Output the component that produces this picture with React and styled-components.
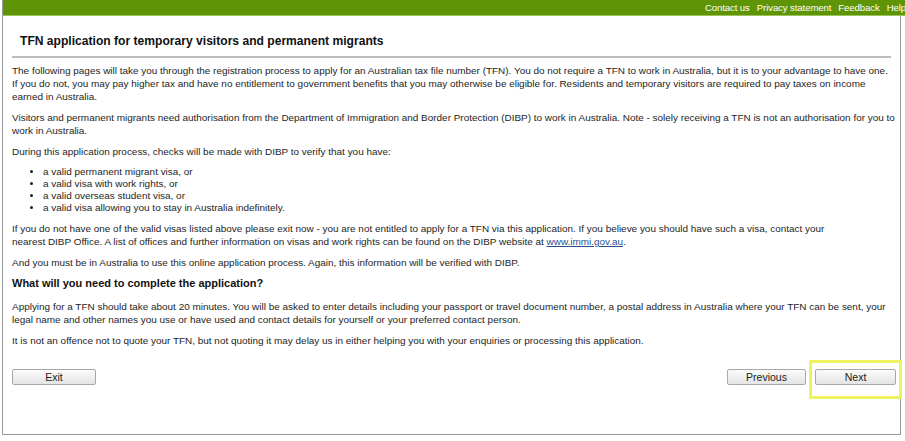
import React from 'react'
import styled, { createGlobalStyle } from 'styled-components'

const GlobalStyle = createGlobalStyle`
  html, body {
    margin: 0;
    padding: 0;
    background: #fff;
    overflow: hidden;
  }
  body {
    font-family: "Liberation Sans", Arial, sans-serif;
    color: #1e1e1e;
  }
`

const Page = styled.div`
  width: 905px;
  height: 441px;
  padding-left: 2px;
  box-sizing: border-box;
  overflow: hidden;
`

const Frame = styled.div`
  border-left: 1px solid #9a9a9a;
`

// the bar runs past the frame, so "Help" gets clipped at the window edge
const TopBar = styled.div`
  width: 903px;
  height: 15px;
  padding-right: 8px;
  background: #5f9407;
  border-bottom: 1px solid #9cc25a;
  display: flex;
  justify-content: flex-end;
  align-items: center;
  gap: 7px;
`

const TopLink = styled.a`
  color: #fff;
  font-size: 9.6px;
  text-decoration: none;
  letter-spacing: -0.1px;
`

const Content = styled.div`
  position: relative;
  width: 898px;
  height: 419px;
  border-right: 1px solid #9a9a9a;
  border-bottom: 1px solid #9a9a9a;
  padding: 0 2px 0 9px;
  box-sizing: border-box;
`

const Title = styled.h1`
  margin: 0;
  padding: 18px 0 0 8px;
  font-size: 12.1px;
  font-weight: bold;
  line-height: 15px;
  color: #111;
`

const Rule = styled.hr`
  margin: 7px 7px 0 0;
  border: none;
  height: 2px;
  background: #bdbdbd;
`

// lines are broken by hand where the original page breaks them
const Body = styled.div`
  font-size: 9.95px;
  line-height: 13px;
  padding: 6px 0 0 0;
`

const Para = styled.p`
  margin: 0 0 8px 0;
`

const List = styled.ul`
  margin: 0 0 8px 0;
  padding-left: 31px;
  line-height: 12px;
  list-style: disc;
`

const Heading = styled.h2`
  margin: 0 0 10px 0;
  font-size: 11px;
  line-height: 13px;
  font-weight: bold;
  color: #111;
`

const Link = styled.a`
  color: #29508f;
  text-decoration: underline;
`

const ButtonRow = styled.div`
  display: flex;
  align-items: center;
  justify-content: space-between;
  margin-top: 22px;
  margin-right: 7px;
`

const ButtonGroup = styled.div`
  display: flex;
  gap: 9px;
  margin-right: -5px;
`

const Button = styled.button`
  width: ${p => p.$w}px;
  height: 16px;
  padding: 0;
  font-family: "Liberation Sans", Arial, sans-serif;
  font-size: 10.5px;
  color: #222;
  background: linear-gradient(#fbfbfb, #e4e4e4);
  border: 1px solid #a8a8a8;
  border-radius: 2px;
`

const Highlight = styled.div`
  position: absolute;
  left: 806px;
  top: 344px;
  width: 87px;
  height: 33px;
  border: 3px solid #eef25e;
  pointer-events: none;
`

export default function App () {
  return (
    <Page>
      <GlobalStyle />
      <Frame>
        <TopBar>
          <TopLink href='#'>Contact us</TopLink>
          <TopLink href='#'>Privacy statement</TopLink>
          <TopLink href='#'>Feedback</TopLink>
          <TopLink href='#'>Help</TopLink>
        </TopBar>
        <Content>
          <Title>TFN application for temporary visitors and permanent migrants</Title>
          <Rule />
          <Body>
            <Para>
              The following pages will take you through the registration process to apply for an Australian tax file number (TFN). You do not require a TFN to work in Australia, but it is to your advantage to have one.<br />
              If you do not, you may pay higher tax and have no entitlement to government benefits that you may otherwise be eligible for. Residents and temporary visitors are required to pay taxes on income<br />
              earned in Australia.
            </Para>
            <Para>
              Visitors and permanent migrants need authorisation from the Department of Immigration and Border Protection (DIBP) to work in Australia. Note - solely receiving a TFN is not an authorisation for you to<br />
              work in Australia.
            </Para>
            <Para>
              During this application process, checks will be made with DIBP to verify that you have:
            </Para>
            <List>
              <li>a valid permanent migrant visa, or</li>
              <li>a valid visa with work rights, or</li>
              <li>a valid overseas student visa, or</li>
              <li>a valid visa allowing you to stay in Australia indefinitely.</li>
            </List>
            <Para>
              If you do not have one of the valid visas listed above please exit now - you are not entitled to apply for a TFN via this application. If you believe you should have such a visa, contact your<br />
              nearest DIBP Office. A list of offices and further information on visas and work rights can be found on the DIBP website at <Link href='#'>www.immi.gov.au</Link>.
            </Para>
            <Para>
              And you must be in Australia to use this online application process. Again, this information will be verified with DIBP.
            </Para>
            <Heading>What will you need to complete the application?</Heading>
            <Para>
              Applying for a TFN should take about 20 minutes. You will be asked to enter details including your passport or travel document number, a postal address in Australia where your TFN can be sent, your<br />
              legal name and other names you use or have used and contact details for yourself or your preferred contact person.
            </Para>
            <Para>
              It is not an offence not to quote your TFN, but not quoting it may delay us in either helping you with your enquiries or processing this application.
            </Para>
          </Body>
          <ButtonRow>
            <Button $w={84}>Exit</Button>
            <ButtonGroup>
              <Button $w={79}>Previous</Button>
              <Button $w={81}>Next</Button>
            </ButtonGroup>
          </ButtonRow>
          <Highlight />
        </Content>
      </Frame>
    </Page>
  )
}
